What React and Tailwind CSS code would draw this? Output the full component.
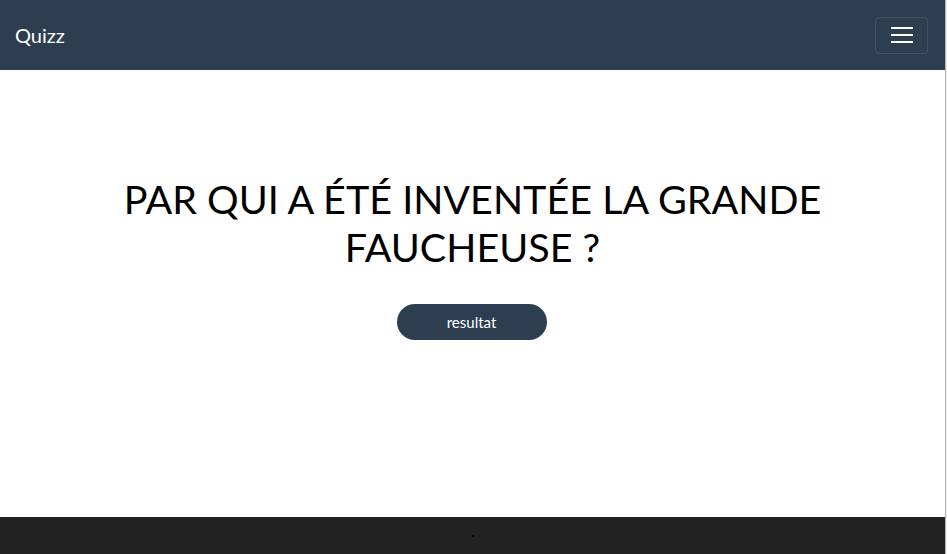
export default function App() {
  return (
    <div className="flex h-[554px] w-[947px] overflow-hidden bg-white font-['Lato','Liberation_Sans',sans-serif]">
      <div className="flex w-[945px] flex-col">
        <nav className="flex h-[70px] items-center justify-between bg-[#2c3e50] pl-[15px] pr-[17px]">
          <span className="-mt-[1px] text-[20px] leading-none text-white">Quizz</span>
          <button className="flex h-[37px] w-[53px] items-center justify-center rounded-[4px] border border-white/10">
            <svg width="24" height="20" viewBox="0 0 24 20">
              <path d="M1 3h22M1 10h22M1 17h22" stroke="#fff" strokeWidth="2" />
            </svg>
          </button>
        </nav>
        <main className="flex flex-1 flex-col items-center pt-[105px]">
          <h1 className="w-[720px] text-center text-[39.5px] leading-[48px] uppercase text-black">
            Par qui a été inventée la grande faucheuse ?
          </h1>
          <button className="mt-[33px] h-[36px] w-[150px] -translate-x-[1px] rounded-full bg-[#2c3e50] text-[15px] text-white">
            resultat
          </button>
        </main>
        <footer className="flex h-[37px] items-center justify-center bg-[#222]">
          <span className="h-[2px] w-[2px] bg-black" />
        </footer>
      </div>
      <div className="w-[1px] bg-[#b5b5b5]" />
      <div className="w-[1px] bg-[#eee]" />
    </div>
  );
}
